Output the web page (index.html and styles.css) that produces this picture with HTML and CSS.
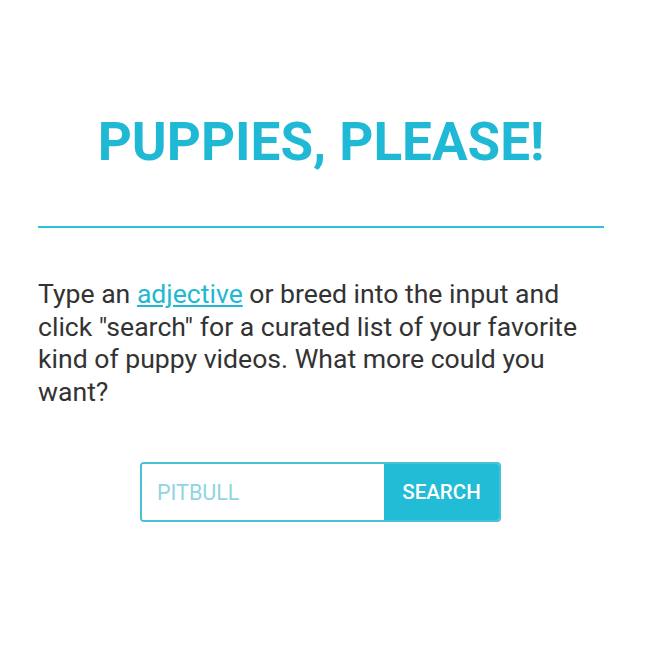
FILE: index.html
```html
<!DOCTYPE html>
<html>
<head>
<meta charset="utf-8">
<link rel="stylesheet" href="styles.css">
</head>
<body>
<main class="page">
  <h1 class="title">PUPPIES, PLEASE!</h1>
  <hr class="rule">
  <p class="intro">Type an <a class="link" href="#">adjective</a> or breed into the input and click "search" for a curated list of your favorite kind of puppy videos. What more could you want?</p>
  <form class="search">
    <input class="search-input" type="text" placeholder="PITBULL">
    <button class="search-btn" type="button">SEARCH</button>
  </form>
</main>
</body>
</html>
```
FILE: styles.css
```css
html, body {
  margin: 0;
  padding: 0;
  background: #fff;
}
body {
  font-family: Roboto, "Liberation Sans", sans-serif;
  color: #333;
}
.page {
  width: 566px;
  margin: 0 0 0 38px;
  padding-top: 107px;
}
.title {
  margin: 0;
  text-align: center;
  font-size: 53px;
  font-weight: 700;
  line-height: 70px;
  color: #20b9d5;
}
.rule {
  margin: 49px 0 0;
  border: 0;
  height: 2px;
  background: #2cc0da;
}
.intro {
  margin: 50px 0 0;
  font-size: 26.6px;
  line-height: 32.5px;
  color: #333;
}
.link {
  color: #22b8d2;
}
.search {
  display: flex;
  width: 361px;
  height: 60px;
  margin: 54px 0 0 102px;
  box-sizing: border-box;
  border: 2px solid #47c2d4;
  border-radius: 4px;
  overflow: hidden;
}
.search-input {
  flex: 1;
  min-width: 0;
  border: 0;
  outline: 0;
  padding: 0 0 0 15px;
  font-family: Roboto, "Liberation Sans", sans-serif;
  font-size: 21.5px;
  color: #333;
}
.search-input::placeholder {
  color: #8fd6e2;
}
.search-btn {
  width: 115px;
  border: 0;
  background: #22bcd6;
  color: #fff;
  font-family: Roboto, "Liberation Sans", sans-serif;
  font-size: 20.5px;
  font-weight: 500;
  padding: 0;
}
```
